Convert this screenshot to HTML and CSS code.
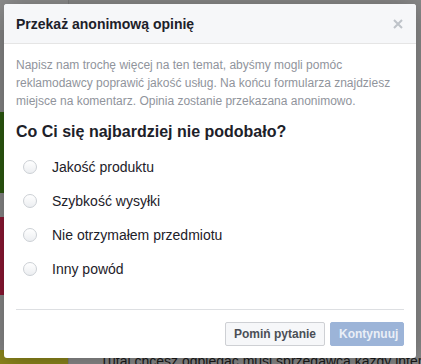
FILE: index.html
```html
<!DOCTYPE html>
<html lang="pl">

<head>
    <meta charset="UTF-8">
    <meta name="viewport" content="width=device-width, initial-scale=1.0">
    <link rel="stylesheet" href="styles.css">
    <title>Przekaż anonimową opinię</title>
</head>

<body>
    <div class="page">
        <div class="page-side">
            <div class="block block-top"></div>
            <div class="block block-grey"></div>
            <div class="block block-green"></div>
            <div class="block block-gap"></div>
            <div class="block block-red"></div>
            <div class="block block-grey2"></div>
            <div class="block block-yellow"></div>
        </div>
        <div class="page-main">
            <p class="page-text">Tutaj chcesz odbiegać musi sprzedawca każdy internetowy</p>
        </div>
    </div>

    <div class="dialog">
        <div class="dialog-header">
            <h1 class="dialog-title">Przekaż anonimową opinię</h1>
            <a class="close" href="#" title="Zamknij">
                <svg width="10" height="10" viewBox="0 0 10 10">
                    <path d="M1 1 L9 9 M9 1 L1 9" stroke="#bec3c9" stroke-width="2" />
                </svg>
            </a>
        </div>

        <div class="dialog-body">
            <p class="intro">Napisz nam trochę więcej na ten temat, abyśmy mogli pomóc reklamodawcy poprawić jakość usług. Na końcu formularza znajdziesz miejsce na komentarz. Opinia zostanie przekazana anonimowo.</p>
            <h2 class="question">Co Ci się najbardziej nie podobało?</h2>

            <ul class="options">
                <li class="option"><span class="radio"></span>Jakość produktu</li>
                <li class="option"><span class="radio"></span>Szybkość wysyłki</li>
                <li class="option"><span class="radio"></span>Nie otrzymałem przedmiotu</li>
                <li class="option"><span class="radio"></span>Inny powód</li>
            </ul>
        </div>

        <div class="dialog-footer">
            <button class="btn">Pomiń pytanie</button>
            <button class="btn btn-primary" disabled>Kontynuuj</button>
        </div>
    </div>
</body>

</html>
```

FILE: styles.css
```css
body {
    margin: 0;
    width: 421px;
    height: 364px;
    overflow: hidden;
    font-family: "Liberation Sans", Arial, sans-serif;
    background: #8a8a8a;
}

/* dimmed page behind the dialog */
.page {
    display: flex;
    height: 364px;
}

.page-side {
    width: 68px;
    flex-shrink: 0;
    display: flex;
    flex-direction: column;
    border-right: 1px solid #7d7d7d;
}

.block-top {
    height: 30px;
    background: #8e8e8e;
}

.block-grey {
    height: 82px;
    background: #858585;
}

.block-green {
    height: 81px;
    background: #2d5a10;
}

.block-gap {
    height: 24px;
    background: #868686;
}

.block-red {
    height: 78px;
    background: #8c1733;
}

.block-grey2 {
    height: 55px;
    background: #878787;
}

.block-yellow {
    flex: 1;
    background: #8c861c;
}

.page-main {
    flex: 1;
    min-width: 0;
    overflow: hidden;
    display: flex;
    align-items: flex-end;
}

.page-text {
    margin: 0 0 -4px 31px;
    font-size: 14px;
    line-height: 14px;
    white-space: nowrap;
    color: #1a1a1a;
}

/* dialog */
.dialog {
    position: absolute;
    left: 4px;
    top: 4px;
    width: 412px;
    height: 354px;
    background: #fff;
    border-radius: 3px;
    box-shadow: 0 2px 26px rgba(0, 0, 0, .3);
    display: flex;
    flex-direction: column;
    overflow: hidden;
}

.dialog-header {
    height: 39px;
    background: #f6f7f9;
    border-bottom: 1px solid #e5e5e5;
    display: flex;
    align-items: center;
    justify-content: space-between;
    padding: 0 12px;
}

.dialog-title {
    margin: 0;
    font-size: 14px;
    font-weight: bold;
    color: #1d2129;
}

.close {
    display: flex;
    margin-right: 1px;
}

.dialog-body {
    flex: 1;
    padding: 12px 12px 0;
}

.intro {
    margin: 0;
    font-size: 12px;
    line-height: 18px;
    color: #90949c;
}

.question {
    margin: 12px 0 0;
    font-size: 16px;
    line-height: 20px;
    font-weight: bold;
    color: #1d2129;
}

.options {
    list-style: none;
    margin: 8px 0 0;
    padding: 0;
}

.option {
    height: 34px;
    display: flex;
    align-items: center;
    font-size: 14px;
    color: #1d2129;
}

.radio {
    width: 12px;
    height: 12px;
    margin: 0 15px 0 7px;
    border: 1px solid #ccd0d5;
    border-radius: 50%;
    background: linear-gradient(#fff, #eceef1);
}

.dialog-footer {
    margin: 0 12px;
    padding: 12px 0;
    border-top: 1px solid #dddfe2;
    display: flex;
    justify-content: flex-end;
    gap: 5px;
}

.btn {
    height: 24px;
    padding: 0 8px;
    font-family: "Liberation Sans", Arial, sans-serif;
    font-size: 12px;
    font-weight: bold;
    color: #4b4f56;
    background: #f6f7f9;
    border: 1px solid #ced0d4;
    border-radius: 2px;
}

.btn-primary {
    width: 74px;
    color: rgba(255, 255, 255, .8);
    background: #9cb4d8;
    border-color: #9cb4d8;
}
```
